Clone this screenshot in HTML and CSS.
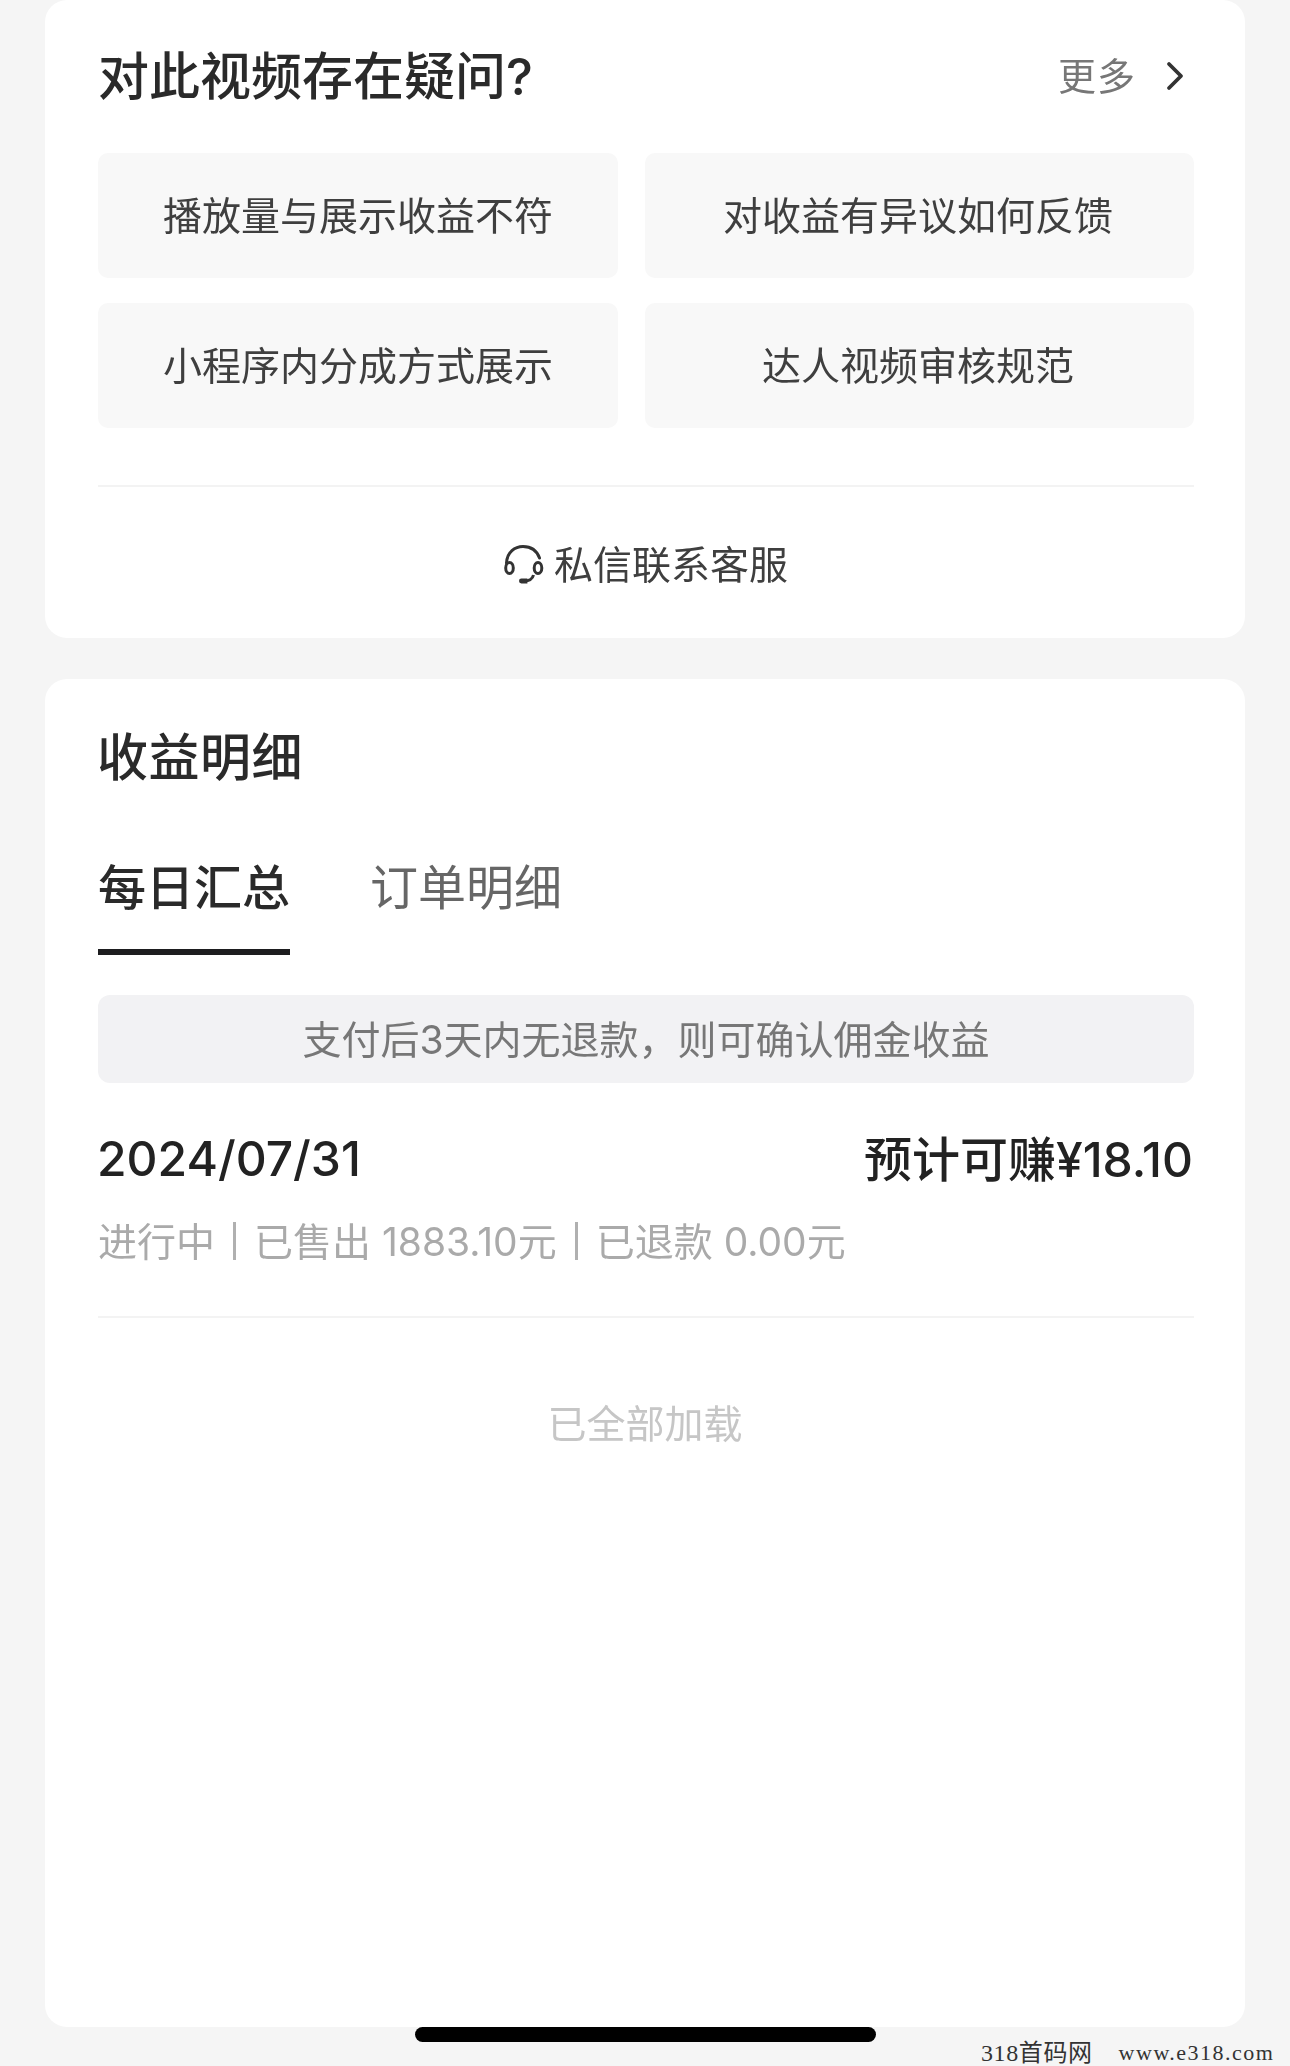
FILE: index.html
```html
<!DOCTYPE html>
<html lang="zh-CN">
<head>
<meta charset="utf-8">
<title>收益明细</title>
<link rel="stylesheet" href="styles.css">
</head>
<body>
<main class="page">
  <section class="card card-help">
    <header class="help-head">
      <h2 class="title">对此视频存在疑问?</h2>
      <a class="more">
        <span class="more-text">更多</span>
        <svg class="chevron" viewBox="0 0 18 30" width="18" height="30" aria-hidden="true"><path d="M3 3 L15 15 L3 27" fill="none" stroke="#333" stroke-width="3.8" stroke-linecap="round" stroke-linejoin="round"/></svg>
      </a>
    </header>
    <div class="faq">
      <div class="faq-item">播放量与展示收益不符</div>
      <div class="faq-item faq-right">对收益有异议如何反馈</div>
      <div class="faq-item">小程序内分成方式展示</div>
      <div class="faq-item faq-right">达人视频审核规范</div>
    </div>
    <div class="rule"></div>
    <div class="contact">
      <svg class="headset" viewBox="0 0 40 40" width="40" height="40" aria-hidden="true">
        <g fill="none" stroke="#333" stroke-width="3">
          <path d="M2.5 18 C3 7 11 1.5 19 1.5 C27 1.5 33 6 35.5 13" stroke-linecap="round"/>
          <ellipse cx="5.5" cy="23" rx="3.8" ry="5.6"/>
          <ellipse cx="34" cy="23" rx="3.8" ry="5.6"/>
          <path d="M29.5 30 C28.5 34 25 36 20 36"/>
        </g>
        <path d="M15 36 a2.4 2.4 0 0 1 2.4 -2.4 h6 v4.8 h-6 a2.4 2.4 0 0 1 -2.4 -2.4z" fill="#333"/>
      </svg>
      <span class="contact-text">私信联系客服</span>
    </div>
  </section>

  <section class="card card-detail">
    <h2 class="title title-detail">收益明细</h2>
    <nav class="tabs">
      <span class="tab tab-on">每日汇总</span>
      <span class="tab">订单明细</span>
    </nav>
    <div class="notice">支付后3天内无退款，则可确认佣金收益</div>
    <div class="row">
      <span class="date">2024/07/31</span>
      <span class="earn">预计可赚¥18.10</span>
    </div>
    <div class="meta">进行中<i class="sep"></i>已售出 1883.10元<i class="sep"></i>已退款 0.00元</div>
    <div class="rule rule-detail"></div>
    <div class="loaded">已全部加载</div>
  </section>
</main>
<div class="home-bar"></div>
<div class="watermark"><span class="wm-cn">318首码网</span><span class="wm-url">www.e318.com</span></div>
</body>
</html>
```

FILE: styles.css
```css
* { box-sizing: border-box; }
html, body { margin: 0; padding: 0; }
body {
  position: relative;
  width: 1290px;
  height: 2066px;
  overflow: hidden;
  background: #f5f5f5;
  color: #222;
  font-family: "Inter", "Noto Sans CJK SC", sans-serif;
}
.page {
  padding: 0 45px;
  filter: blur(0.6px);
}
.card {
  background: #fff;
  padding: 0 51px 0 53px;
  border-radius: 22px;
}
.card-help { height: 638px; }
.card-detail { height: 1348px; margin-top: 41px; }

.title {
  margin: 0;
  font-size: 51px;
  line-height: 60px;
  font-weight: 500;
  color: #2a2a2a;
}
.help-head {
  display: flex;
  align-items: center;
  justify-content: space-between;
  height: 153px;
}
.more {
  display: flex;
  align-items: center;
  gap: 30px;
  margin-right: 10px;
  color: #777;
  font-size: 38px;
}
.more-text { letter-spacing: 1px; margin-top: -6px; }
.chevron { display: block; margin-top: -2px; }

.faq {
  display: grid;
  grid-template-columns: 520px 549px;
  grid-auto-rows: 125px;
  gap: 25px 27px;
}
.faq-item {
  display: flex;
  align-items: center;
  justify-content: center;
  padding-bottom: 5px;
  background: #f8f8f8;
  border-radius: 10px;
  color: #3f3f3f;
  font-size: 39px;
}
.faq-right { padding-right: 3px; }
.rule { height: 2px; margin-top: 57px; background: #f3f3f3; }
.contact {
  display: flex;
  align-items: center;
  justify-content: center;
  gap: 10px;
  height: 151px;
  padding-top: 4px;
  color: #3f3f3f;
  font-size: 39px;
}
.contact-text { margin-top: -5px; }
.headset { display: block; }

.title-detail { padding-top: 49px; height: 109px; letter-spacing: 0.5px; margin-left: -1px; }
.tabs { display: flex; gap: 80px; margin-top: 70px; }
.tab {
  width: 192px;
  height: 97px;
  line-height: 60px;
  font-size: 48px;
  color: #666;
  white-space: nowrap;
}
.tab-on {
  font-weight: 500;
  color: #2a2a2a;
  border-bottom: 6px solid #1d1d1f;
}
.notice {
  display: flex;
  align-items: center;
  justify-content: center;
  height: 88px;
  margin-top: 40px;
  padding-bottom: 5px;
  background: #f2f2f4;
  border-radius: 12px;
  color: #777;
  font-size: 39px;
}
.row {
  display: flex;
  justify-content: space-between;
  align-items: center;
  height: 60px;
  margin-top: 45px;
  font-size: 48px;
  font-weight: 500;
  color: #222;
}
.date { margin-top: 0; margin-left: -1px; }
.earn { margin-top: -5px; margin-right: 1px; }
.meta {
  display: flex;
  align-items: center;
  height: 50px;
  margin-top: 26px;
  color: #aaa;
  font-size: 39px;
  white-space: pre;
}
.sep {
  width: 3px;
  height: 38px;
  margin: 4px 18px 0;
  background: #b0b0b0;
}
.rule-detail { margin-top: 52px; }
.loaded {
  margin-top: 81px;
  line-height: 50px;
  text-align: center;
  color: #c6c6c6;
  font-size: 39px;
  padding-right: 2px;
}

.home-bar {
  position: absolute;
  left: 415px;
  top: 2027px;
  width: 461px;
  height: 15px;
  border-radius: 8px;
  background: #000;
  filter: blur(0.5px);
}
.watermark {
  position: absolute;
  left: 981px;
  top: 2038px;
  display: flex;
  gap: 26px;
  height: 30px;
  line-height: 30px;
  color: #333;
  white-space: nowrap;
  font-family: "Liberation Serif", "Noto Sans CJK SC", serif;
  font-size: 24px;
}
.wm-cn { letter-spacing: 0.6px; }
.wm-url { font-size: 22px; letter-spacing: 1.5px; }
```
